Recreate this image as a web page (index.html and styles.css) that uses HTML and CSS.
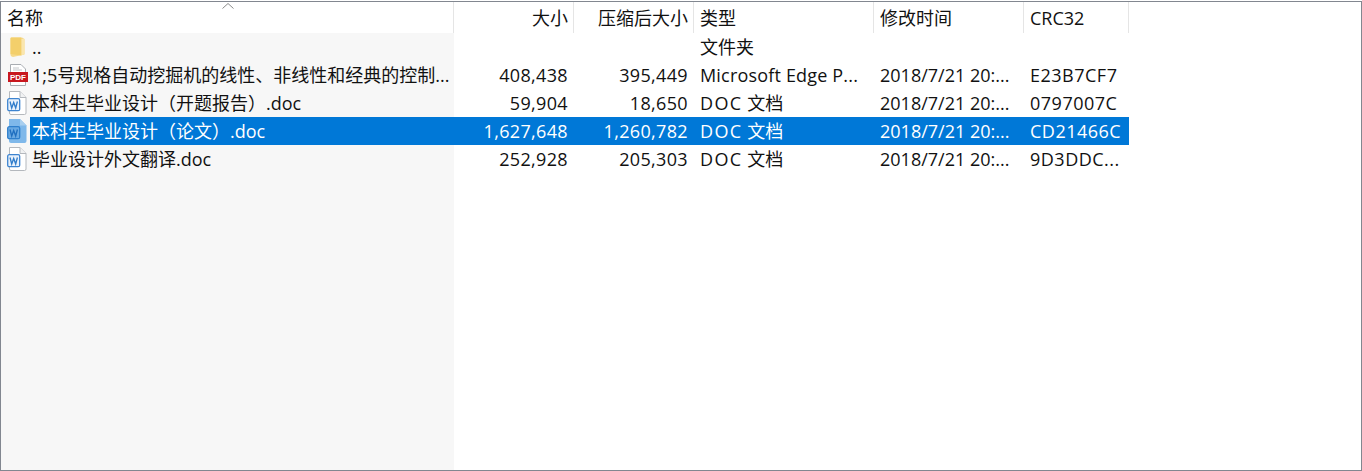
FILE: index.html
```html
<!DOCTYPE html>
<html lang="zh-CN">
<head>
<meta charset="utf-8">
<title>文件列表</title>
<link rel="stylesheet" href="styles.css">
</head>
<body>
<svg class="defs" width="0" height="0" aria-hidden="true">
  <defs>
    <symbol id="doc" viewBox="0 0 20 24">
      <path d="M2.500 .5H13L19 6.500V22a1.500 1.500 0 0 1-1.500 1.500H4A1.500 1.500 0 0 1 2.500 22Z" fill="#fff" stroke="#b4b8bd"/>
      <path d="M13 .5V6.500H19" fill="#f1f2f3" stroke="#b4b8bd"/>
      <rect x=".7" y="7.700" width="12" height="12" rx="1.500" fill="#e8f1fb" stroke="#3d84d0" stroke-width="1.300"/>
      <path d="M3 10.500L4.700 17L6.700 11.500L8.700 17L10.400 10.500" fill="none" stroke="#2f7ccb" stroke-width="1.300"/>
    </symbol>
    <symbol id="doc-sel" viewBox="0 0 20 24">
      <path d="M2 0H13L19.500 6.500V22a2 2 0 0 1-2 2H4a2 2 0 0 1-2-2Z" fill="#7fb8ea"/>
      <path d="M13 0V6.500H19.500Z" fill="#a9cfef"/>
      <rect x=".7" y="7.700" width="12" height="12" rx="1.500" fill="#6aa9e2" stroke="#2f7fcc" stroke-width="1.300"/>
      <path d="M3 10.500L4.700 17L6.700 11.500L8.700 17L10.400 10.500" fill="none" stroke="#1f6fc0" stroke-width="1.300"/>
    </symbol>
  </defs>
</svg>
<main class="frame">
  <div class="row head">
    <div class="cell name-head">名称</div>
    <div class="cell num sep">大小</div>
    <div class="cell num sep">压缩后大小</div>
    <div class="cell txt sep">类型</div>
    <div class="cell txt sep">修改时间</div>
    <div class="cell txt sep">CRC32</div>
    <svg class="sort" width="12" height="6" viewBox="0 0 12 6"><path d="M.5 5.500L6 .5L11.500 5.500" fill="none" stroke="#8a8a8a"/></svg>
  </div>
  <div class="list">
    <div class="row">
      <div class="ico ico-folder"><svg width="15" height="20" viewBox="0 0 15 20"><path d="M.5 1.500Q.5 .5 1.500 .5H12L14.500 2V17.500L3 20Q.5 19.500 .5 18Z" fill="#f6d98a"/><path d="M.5 1.500Q.5 .5 1.500 .5H11L11.500 2V18.500L.5 17Z" fill="#f3cf6b"/><path d="M11.500 2H14.500V17L11.500 18.500Z" fill="#fae6ae"/></svg></div>
      <div class="cell fname">..</div>
      <div class="cell num"></div>
      <div class="cell num"></div>
      <div class="cell txt">文件夹</div>
      <div class="cell txt"></div>
      <div class="cell txt"></div>
    </div>
    <div class="row">
      <div class="ico ico-pdf"><svg width="20" height="22" viewBox="0 0 20 22"><path d="M2.500 .5H13L17.500 5V21.500H2.500Z" fill="#fff" stroke="#a9adb2"/><path d="M5 4H11M5 6H14" stroke="#c4c7ca"/><rect y="8" width="20" height="10" fill="#c8171e"/><text class="pdf" x="10" y="16.200">PDF</text></svg></div>
      <div class="cell fname">1;5号规格自动挖掘机的线性、非线性和经典的控制...</div>
      <div class="cell num">408,438</div>
      <div class="cell num">395,449</div>
      <div class="cell txt wide">Microsoft Edge P...</div>
      <div class="cell txt">2018/7/21 20:...</div>
      <div class="cell txt crc">E23B7CF7</div>
    </div>
    <div class="row">
      <div class="ico"><svg width="20" height="24"><use href="#doc"/></svg></div>
      <div class="cell fname">本科生毕业设计（开题报告）.doc</div>
      <div class="cell num">59,904</div>
      <div class="cell num">18,650</div>
      <div class="cell txt"><span class="latin">DOC</span> 文档</div>
      <div class="cell txt">2018/7/21 20:...</div>
      <div class="cell txt crc">0797007C</div>
    </div>
    <div class="row selected">
      <div class="ico"><svg width="20" height="24"><use href="#doc-sel"/></svg></div>
      <div class="cell fname">本科生毕业设计（论文）.doc</div>
      <div class="cell num">1,627,648</div>
      <div class="cell num">1,260,782</div>
      <div class="cell txt"><span class="latin">DOC</span> 文档</div>
      <div class="cell txt">2018/7/21 20:...</div>
      <div class="cell txt crc">CD21466C</div>
    </div>
    <div class="row">
      <div class="ico"><svg width="20" height="24"><use href="#doc"/></svg></div>
      <div class="cell fname">毕业设计外文翻译.doc</div>
      <div class="cell num">252,928</div>
      <div class="cell num">205,303</div>
      <div class="cell txt"><span class="latin">DOC</span> 文档</div>
      <div class="cell txt">2018/7/21 20:...</div>
      <div class="cell txt crc">9D3DDC...</div>
    </div>
  </div>
</main>
</body>
</html>
```
FILE: styles.css
```css
* { box-sizing: border-box; }
html, body { height: 100%; }
body {
  margin: 0;
  background: #fff;
  color: #111;
  font: 18px/28px "Open Sans", "Noto Sans CJK SC", sans-serif;
  overflow: hidden;
}
.defs { position: absolute; }
.frame {
  margin-top: 1px;
  height: 470px;
  border: 1px solid #828790;
  display: flex;
  flex-direction: column;
}
.row {
  display: grid;
  grid-template-columns: 29px 424px 120px 120px 180px 150px 105px;
  width: 1128px;
  height: 28px;
  position: relative;
}
.head {
  grid-template-columns: 452px 120px 120px 180px 150px 106px;
  height: 31px;
}
.cell { white-space: nowrap; overflow: hidden; }
.name-head { padding-left: 6px; }
.head .cell { line-height: 33px; }
.sep { border-left: 1px solid #e5e5e5; }
.head .txt:last-of-type { border-right: 1px solid #e5e5e5; }
.num { text-align: right; padding-right: 6px; letter-spacing: .35px; }
.head .num { letter-spacing: 0; padding-right: 5px; }
.txt { padding-left: 6px; }
.wide { letter-spacing: .18px; }
.crc { letter-spacing: .5px; }
.latin { letter-spacing: 1.4px; }
.fname { padding-left: 2px; }
.sort { position: absolute; left: 221px; top: 1px; }
.list {
  flex: 1;
  background: linear-gradient(to right, #f7f7f7 453px, #fff 453px);
}
.ico { display: flex; align-items: center; padding-left: 6px; }
.ico-folder { padding-left: 9px; }
.ico-pdf { padding-left: 7px; }
.ico svg { display: block; }
.selected .cell { background: #0078d7; color: #fff; }
.pdf {
  font: 700 8px "Liberation Sans", sans-serif;
  fill: #fff;
  text-anchor: middle;
}
```
